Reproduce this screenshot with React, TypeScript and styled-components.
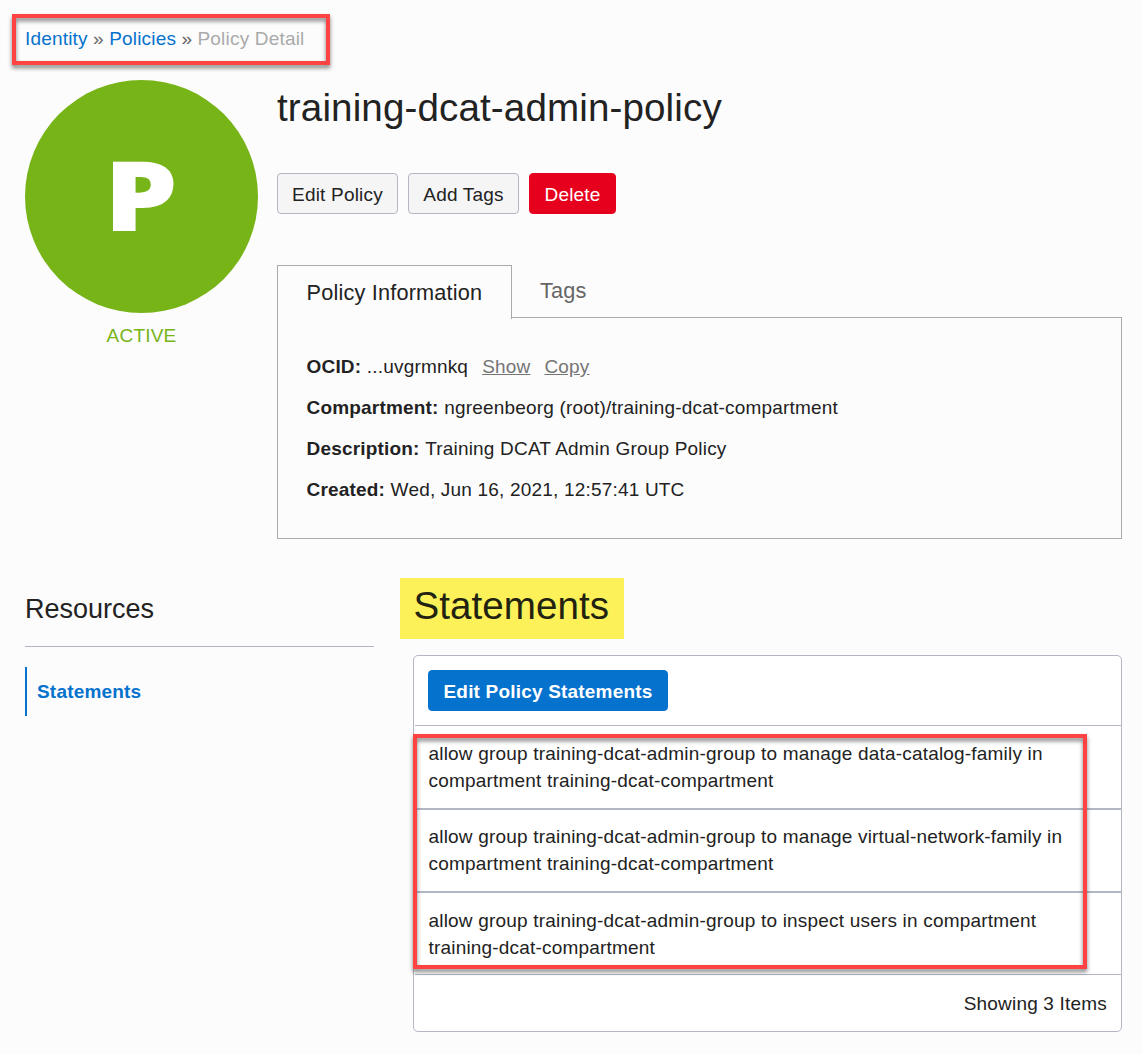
import React from 'react';
import styled, { createGlobalStyle, css } from 'styled-components';

const GlobalStyle = createGlobalStyle`
  *, *::before, *::after { box-sizing: border-box; }
  body {
    margin: 0;
    background: #fcfcfc;
    color: #222;
    font-family: "Liberation Sans", Arial, Helvetica, sans-serif;
    font-size: 19px;
    line-height: 27px;
    letter-spacing: 0.19px;
  }
  h1, h2, p, ul, dl, dd { margin: 0; padding: 0; font-weight: 400; }
`;

const Page = styled.main`
  width: 1142px;
  height: 1054px;
  padding: 25px 20px 22px 25px;
  overflow: hidden;
`;

const Breadcrumbs = styled.nav`
  position: relative;
  display: flex;
  gap: 5.3px;
  height: 27px;
  color: #666;
  white-space: nowrap;
`;

const CrumbLink = styled.a`
  color: #0572ce;
`;

const CrumbCurrent = styled.span`
  color: #aaa;
`;

const Callout = styled.div<{ $top: number; $left: number; $width: number; $height: number }>`
  position: absolute;
  top: ${(p) => p.$top}px;
  left: ${(p) => p.$left}px;
  width: ${(p) => p.$width}px;
  height: ${(p) => p.$height}px;
  border: 4px solid #ff4343;
  filter: drop-shadow(0 3px 2px rgba(0, 0, 0, 0.5));
  pointer-events: none;
`;

const Overview = styled.section`
  display: flex;
  gap: 19px;
  margin-top: 28px;
`;

const StatusColumn = styled.div`
  width: 233px;
  flex: none;
  text-align: center;
`;

const PolicyBadge = styled.div`
  display: flex;
  align-items: center;
  justify-content: center;
  height: 233px;
  padding: 0 2px 7px 0;
  border-radius: 50%;
  background: #77b418;
`;

const PolicyInitial = styled.span`
  color: #fff;
  font: 800 98px/1 "Open Sans", sans-serif;
  letter-spacing: 0;
  transform: scaleX(1.19);
`;

const Status = styled.p`
  margin-top: 9px;
  color: #77b418;
`;

const DetailColumn = styled.div`
  flex: 1;
`;

const PolicyName = styled.h1`
  margin-top: 4px;
  font-size: 38.6px;
  line-height: 47px;
  letter-spacing: 0.12px;
`;

const Actions = styled.div`
  display: flex;
  gap: 10px;
  margin-top: 42px;
`;

const tones = {
  plain: css`
    background: #f5f5f5;
    border-color: #b2b7c3;
    color: #222;
  `,
  danger: css`
    background: #e7001d;
    border-color: #e7001d;
    color: #fff;
  `,
  primary: css`
    background: #0572ce;
    border-color: #0572ce;
    color: #fff;
    font-weight: 700;
  `,
};

const Button = styled.button<{ $tone: keyof typeof tones; $width: number }>`
  width: ${(p) => p.$width}px;
  height: 41px;
  padding: 2px 0 0;
  border: 1px solid;
  border-radius: 4px;
  font: inherit;
  letter-spacing: inherit;
  white-space: nowrap;
  ${(p) => tones[p.$tone]}
`;

const Tabs = styled.div`
  display: flex;
  height: 52px;
  margin-top: 51px;
`;

const Tab = styled.div<{ $active?: boolean }>`
  font-size: 21.7px;
  line-height: 28px;
  padding: 12px 28px 0;
  color: #666;
  ${(p) =>
    p.$active &&
    css`
      position: relative;
      width: 235px;
      height: 54px;
      padding-top: 13px;
      padding-left: 28.5px;
      border: 1px solid #aaaaac;
      border-bottom: 0;
      background: #fcfcfc;
      color: #222;
      white-space: nowrap;
    `}
`;

const InfoPanel = styled.dl`
  display: flex;
  flex-direction: column;
  gap: 14px;
  height: 222px;
  padding: 35px 28.5px;
  border: 1px solid #aaaaac;
`;

const InfoRow = styled.div`
  display: flex;
  gap: 5.5px;
`;

const Term = styled.dt`
  font-weight: 700;
`;

const TextLink = styled.a`
  margin-left: 14px;
  color: #757575;
  text-decoration: underline;
`;

const Lower = styled.section`
  display: flex;
  gap: 39px;
`;

const Resources = styled.aside`
  width: 349px;
  flex: none;
  padding-top: 53px;
`;

const ResourcesTitle = styled.h2`
  padding-bottom: 20px;
  border-bottom: 1px solid #b2b7c3;
  font-size: 27px;
  line-height: 34px;
  letter-spacing: 0;
`;

const ResourceLink = styled.a`
  display: block;
  height: 49px;
  margin-top: 20px;
  padding: 11px 10px;
  border-left: 2px solid #0572ce;
  color: #0572ce;
  font-weight: 700;
`;

const StatementsColumn = styled.div`
  flex: 1;
  padding-top: 39px;
`;

const StatementsTitle = styled.h2`
  width: 224px;
  height: 61px;
  margin-left: -13px;
  padding-left: 13.5px;
  background: #fcf158;
  color: #222210;
  font-size: 38.6px;
  line-height: 56px;
  letter-spacing: 0.05px;
`;

const Card = styled.div`
  position: relative;
  margin-top: 16px;
  height: 377px;
  border: 1px solid #b2b7c3;
  border-radius: 5px;
  background: #fff;
`;

const CardHeader = styled.div`
  height: 70px;
  margin-left: 1px;
  padding: 14px 13px;
  border-bottom: 1px solid #b2b7c3;
`;

const StatementList = styled.ul`
  display: grid;
  grid-template-rows: 84px 83px 81px;
  margin-left: 1px;
  list-style: none;
`;

const Statement = styled.li`
  padding: 13px 40px 0 13.5px;
  border-bottom: 2px solid #b2b7c3;
  &:first-child {
    padding-top: 14px;
  }
  &:last-child {
    padding-top: 14px;
    border-bottom: 0;
  }
`;

const CardFooter = styled.div`
  margin-left: 1px;
  padding: 15px 14px;
  border-top: 1px solid #b2b7c3;
  text-align: right;
`;

const statements = [
  'allow group training-dcat-admin-group to manage data-catalog-family in compartment training-dcat-compartment',
  'allow group training-dcat-admin-group to manage virtual-network-family in compartment training-dcat-compartment',
  'allow group training-dcat-admin-group to inspect users in compartment training-dcat-compartment',
];

const details = [
  { label: 'Compartment:', value: 'ngreenbeorg (root)/training-dcat-compartment' },
  { label: 'Description:', value: 'Training DCAT Admin Group Policy' },
  { label: 'Created:', value: 'Wed, Jun 16, 2021, 12:57:41 UTC' },
];

export default function App() {
  return (
    <Page>
      <GlobalStyle />
      <Breadcrumbs>
        <CrumbLink>Identity</CrumbLink>
        <span>»</span>
        <CrumbLink>Policies</CrumbLink>
        <span>»</span>
        <CrumbCurrent>Policy Detail</CrumbCurrent>
        <Callout $top={-11} $left={-13} $width={318} $height={51} />
      </Breadcrumbs>

      <Overview>
        <StatusColumn>
          <PolicyBadge>
            <PolicyInitial>P</PolicyInitial>
          </PolicyBadge>
          <Status>ACTIVE</Status>
        </StatusColumn>
        <DetailColumn>
          <PolicyName>training-dcat-admin-policy</PolicyName>
          <Actions>
            <Button $tone="plain" $width={121}>Edit Policy</Button>
            <Button $tone="plain" $width={111}>Add Tags</Button>
            <Button $tone="danger" $width={87}>Delete</Button>
          </Actions>
          <Tabs>
            <Tab $active>Policy Information</Tab>
            <Tab>Tags</Tab>
          </Tabs>
          <InfoPanel>
            <InfoRow>
              <Term>OCID:</Term>
              <dd>
                ...uvgrmnkq
                <TextLink>Show</TextLink>
                <TextLink>Copy</TextLink>
              </dd>
            </InfoRow>
            {details.map((d) => (
              <InfoRow key={d.label}>
                <Term>{d.label}</Term>
                <dd>{d.value}</dd>
              </InfoRow>
            ))}
          </InfoPanel>
        </DetailColumn>
      </Overview>

      <Lower>
        <Resources>
          <ResourcesTitle>Resources</ResourcesTitle>
          <ResourceLink>Statements</ResourceLink>
        </Resources>
        <StatementsColumn>
          <StatementsTitle>Statements</StatementsTitle>
          <Card>
            <CardHeader>
              <Button $tone="primary" $width={240}>Edit Policy Statements</Button>
            </CardHeader>
            <StatementList>
              {statements.map((s) => (
                <Statement key={s}>{s}</Statement>
              ))}
            </StatementList>
            <CardFooter>Showing 3 Items</CardFooter>
            <Callout $top={78} $left={-1} $width={674} $height={235} />
          </Card>
        </StatementsColumn>
      </Lower>
    </Page>
  );
}
